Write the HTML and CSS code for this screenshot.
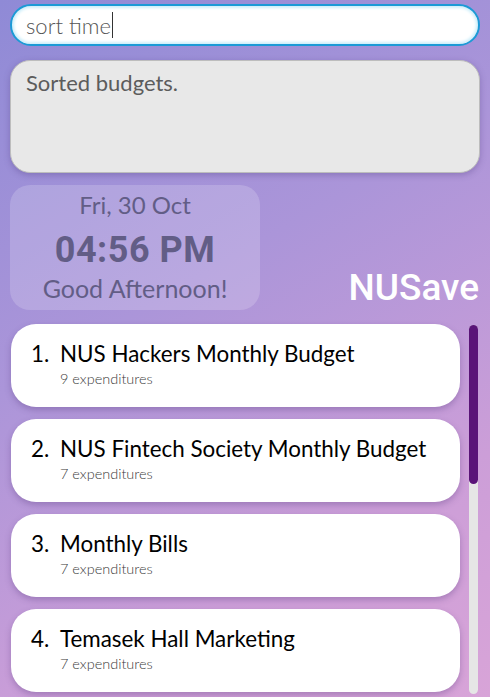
FILE: index.html
```html
<!DOCTYPE html>
<html lang="en">
<head>
<meta charset="UTF-8">
<meta name="viewport" content="width=device-width, initial-scale=1.0">
<title>NUSave</title>
<link rel="stylesheet" href="styles.css">
</head>
<body>

<div class="app">
  <div class="command-box">
    <span class="command-text">sort time</span><span class="caret"></span>
  </div>

  <div class="result-box">Sorted budgets.</div>

  <div class="header-row">
    <div class="clock-card">
      <div class="clock-date">Fri, 30 Oct</div>
      <div class="clock-time">04:56 PM</div>
      <div class="clock-greeting">Good Afternoon!</div>
    </div>
    <div class="app-title">NUSave</div>
  </div>

  <div class="list-area">
    <div class="budget-list">
      <div class="budget-card">
        <div class="budget-title"><span class="budget-index">1.</span>NUS Hackers Monthly Budget</div>
        <div class="budget-sub">9 expenditures</div>
      </div>
      <div class="budget-card">
        <div class="budget-title"><span class="budget-index">2.</span>NUS Fintech Society Monthly Budget</div>
        <div class="budget-sub">7 expenditures</div>
      </div>
      <div class="budget-card">
        <div class="budget-title"><span class="budget-index">3.</span>Monthly Bills</div>
        <div class="budget-sub">7 expenditures</div>
      </div>
      <div class="budget-card">
        <div class="budget-title"><span class="budget-index">4.</span>Temasek Hall Marketing</div>
        <div class="budget-sub">7 expenditures</div>
      </div>
    </div>
    <div class="scroll-track">
      <div class="scroll-thumb"></div>
    </div>
  </div>
</div>

</body>
</html>
```

FILE: styles.css
```css
html, body {
  margin: 0;
  padding: 0;
  height: 697px;
  overflow: hidden;
}

body {
  font-family: Lato, "Open Sans", sans-serif;
  background: linear-gradient(150deg, #8f8ad6 0%, #ab95d9 40%, #cc9ed8 75%, #d8a4d8 100%);
}

.app {
  padding: 4px 10px 0 10px;
  display: flex;
  flex-direction: column;
}

.command-box {
  height: 42px;
  box-sizing: border-box;
  border: 2px solid #1b9ad6;
  border-radius: 21px;
  background: #fff;
  box-shadow: inset 0 0 3px 2px #cdeefa;
  display: flex;
  align-items: center;
  padding-left: 14px;
}

.command-text {
  font-size: 22px;
  font-weight: 300;
  color: #555;
}

.caret {
  display: inline-block;
  width: 1px;
  height: 26px;
  background: #333;
  margin-left: 1px;
}

.result-box {
  margin-top: 14px;
  height: 113px;
  box-sizing: border-box;
  background: #e8e8e8;
  border: 1px solid #bdbdbd;
  border-radius: 20px;
  box-shadow: 0 2px 6px rgba(80, 60, 130, 0.35);
  padding: 8px 15px;
  font-size: 22px;
  color: #5c5c5c;
}

.header-row {
  margin-top: 12px;
  display: flex;
  justify-content: space-between;
  align-items: flex-end;
}

.clock-card {
  width: 250px;
  height: 125px;
  box-sizing: border-box;
  border-radius: 20px;
  background: rgba(255, 255, 255, 0.18);
  display: flex;
  flex-direction: column;
  align-items: center;
  padding-top: 4px;
  color: #625d86;
}

.clock-date {
  font-size: 24px;
  line-height: 32px;
}

.clock-time {
  font-family: Roboto, sans-serif;
  font-weight: 700;
  font-size: 36px;
  line-height: 46px;
  padding-top: 6px;
  letter-spacing: 0.5px;
}

.clock-greeting {
  font-size: 25px;
  line-height: 30px;
}

.app-title {
  font-family: Roboto, sans-serif;
  font-weight: 500;
  font-size: 37px;
  color: #fff;
  line-height: 44px;
  margin-right: 1px;
  margin-bottom: 0;
}

.list-area {
  margin-top: 14px;
  display: flex;
  gap: 9px;
}

.budget-list {
  flex: 1;
  display: flex;
  flex-direction: column;
  gap: 12px;
  padding-left: 1px;
}

.budget-card {
  height: 83px;
  box-sizing: border-box;
  background: #fff;
  border-radius: 25px;
  box-shadow: 0 3px 6px rgba(90, 60, 130, 0.35);
  padding: 16px 0 0 20px;
}

.budget-title {
  font-size: 22.4px;
  color: #000;
  line-height: 28px;
}

.budget-index {
  display: inline-block;
  width: 29px;
}

.budget-sub {
  margin-left: 29px;
  font-size: 14.5px;
  font-weight: 300;
  color: #3a3a3a;
  line-height: 20px;
  margin-top: 1px;
}

.scroll-track {
  width: 9px;
  height: 369px;
  margin-top: 1px;
  margin-right: 2px;
  background: #e6e6e6;
  border-radius: 5px;
}

.scroll-thumb {
  height: 159px;
  background: #5a1478;
  border-radius: 5px;
}
```
